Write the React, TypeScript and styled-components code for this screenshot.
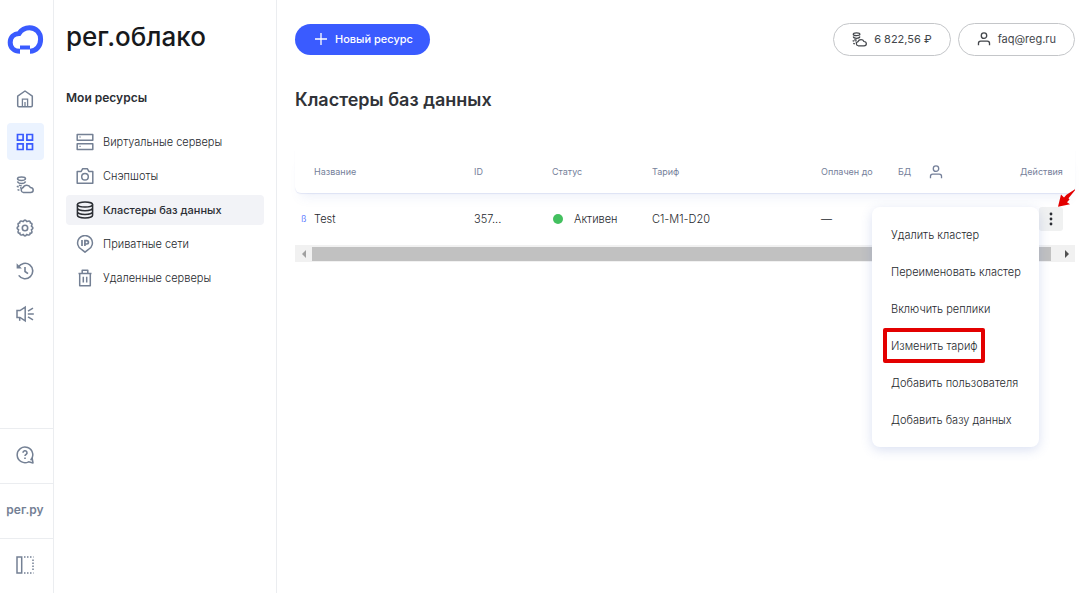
import React from "react";
import styled, { createGlobalStyle, css } from "styled-components";

const color = {
  text: "#25282d",
  strong: "#2b2e34",
  muted: "#75809a",
  icon: "#748094",
  brand: "#3a5bff",
  line: "#ebedf0",
  mark: "#e30000",
};

const GlobalStyle = createGlobalStyle`
  *, *::before, *::after { box-sizing: border-box; }
  body {
    margin: 0;
    background: #fff;
    color: ${color.text};
    font-family: Inter, "Liberation Sans", sans-serif;
    font-size: 11px;
    font-weight: 300;
    line-height: 16px;
  }
  button { font: inherit; color: inherit; border: 0; background: none; padding: 0; cursor: pointer; }
  a { color: inherit; text-decoration: none; }
  ul { list-style: none; margin: 0; padding: 0; }
  svg { display: block; flex: none; }
`;

const Page = styled.div`
  display: flex;
  min-height: 100vh;
`;

const Rail = styled.nav`
  flex: none;
  width: 54px;
  display: flex;
  flex-direction: column;
  border-right: 1px solid ${color.line};
  color: ${color.icon};
`;

const RailLogo = styled.a`
  padding: 24px 7px 25px;
`;

const RailList = styled.ul`
  display: flex;
  flex-direction: column;
  gap: 6px;
  padding-left: 7px;
  flex: 1;
`;

const RailLink = styled.a<{ $active?: boolean }>`
  display: flex;
  align-items: center;
  width: 37px;
  height: 37px;
  padding: 0 9px;
  border-radius: 4px;
  ${(p) => p.$active && css`
    background: #ebf3ff;
    color: ${color.brand};
  `}
`;

const RailFooterLink = styled.a`
  display: flex;
  align-items: center;
  justify-content: center;
  height: 55px;
  padding: 0 3px 2px 0;
  border-top: 1px solid ${color.line};
  font-size: 12px;
  font-weight: 600;
`;

const Sidebar = styled.aside`
  flex: none;
  width: 223px;
  padding: 19px 12px 0;
  border-right: 1px solid ${color.line};
`;

const Brand = styled.a`
  display: block;
  font-size: 26px;
  line-height: 36px;
  font-weight: 500;
  color: #17191c;
`;

const SidebarTitle = styled.h2`
  margin: 35px 0 21px;
  font-size: 12px;
  line-height: 16px;
  font-weight: 600;
  color: ${color.strong};
`;

const SidebarList = styled.ul`
  display: flex;
  flex-direction: column;
  gap: 4px;
`;

const SidebarLink = styled.a<{ $active?: boolean }>`
  display: flex;
  align-items: center;
  gap: 9px;
  height: 30px;
  padding: 0 10px;
  border-radius: 4px;
  svg { color: ${color.icon}; }
  ${(p) => p.$active && css`
    background: #f2f3f7;
    color: ${color.strong};
    font-weight: 500;
    svg { color: ${color.strong}; }
  `}
`;

const Main = styled.main`
  flex: 1;
  min-width: 0;
  padding: 23px 14px 0 18px;
`;

const TopBar = styled.header`
  display: flex;
  align-items: center;
  gap: 7px;
`;

const PrimaryButton = styled.button`
  display: flex;
  align-items: center;
  gap: 8px;
  height: 31px;
  margin-right: auto;
  padding: 0 17px 1px 20px;
  border-radius: 16px;
  background: ${color.brand};
  color: #fff;
  font-weight: 500;
`;

const PillButton = styled.button`
  display: flex;
  align-items: center;
  gap: 7px;
  height: 33px;
  padding: 0 18px 1px;
  border: 1px solid #c4c6c9;
  border-radius: 17px;
  font-weight: 400;
  color: #43464b;
`;

const Title = styled.h1`
  margin: 32px 0 38px;
  font-size: 18px;
  line-height: 24px;
  font-weight: 600;
  color: #303338;
`;

const Table = styled.table`
  width: 100%;
  table-layout: fixed;
  border-collapse: separate;
  border-spacing: 0;
`;

const Col = styled.col<{ $width?: number }>`
  width: ${(p) => (p.$width ? `${p.$width}px` : "auto")};
`;

const HeadRow = styled.tr`
  border-radius: 0 0 6px 6px;
  box-shadow: 0 1px 1px rgba(90, 110, 200, 0.14), 0 10px 12px -6px rgba(90, 120, 210, 0.1);
`;

const HeadCell = styled.th`
  height: 43px;
  padding: 0;
  text-align: left;
  font-size: 9px;
  font-weight: 400;
  color: ${color.muted};
  white-space: nowrap;
  &:first-child { padding-left: 19px; }
`;

const Cell = styled.td`
  height: 52px;
  padding: 0;
  white-space: nowrap;
`;

const NameCell = styled.div`
  display: flex;
  align-items: center;
  gap: 6px;
  padding-left: 6px;
`;

const Beta = styled.span`
  width: 7px;
  font-size: 9px;
  color: ${color.brand};
`;

const Status = styled.div`
  display: flex;
  align-items: center;
  gap: 11px;
  padding-left: 1px;
  &::before {
    content: "";
    width: 10px;
    height: 10px;
    border-radius: 50%;
    background: #43c05f;
  }
`;

const ActionsWrap = styled.div`
  position: relative;
  width: 24px;
  margin-left: 19px;
`;

const MoreButton = styled.button`
  display: flex;
  align-items: center;
  justify-content: center;
  width: 24px;
  height: 24px;
  border-radius: 3px;
  background: #f0f1f1;
  color: ${color.strong};
`;

const Menu = styled.ul`
  position: absolute;
  z-index: 2;
  top: 0;
  right: 100%;
  width: 167px;
  padding: 9px 0;
  border-radius: 8px;
  background: #fff;
  box-shadow: 0 3px 12px rgba(70, 100, 190, 0.2);
`;

const MenuButton = styled.button`
  display: flex;
  align-items: center;
  width: 100%;
  height: 37px;
  padding: 0 11px;
`;

const MenuLabel = styled.span<{ $marked?: boolean }>`
  padding: 6px 3px 5px 4px;
  border: 4px solid ${(p) => (p.$marked ? color.mark : "transparent")};
  border-radius: 2px;
`;

const Pointer = styled.svg`
  position: absolute;
  z-index: 3;
  left: 18px;
  bottom: 100%;
`;

const ScrollTrack = styled.div`
  display: flex;
  align-items: center;
  height: 17px;
  background: #f1f1f1;
`;

const ScrollStep = styled.button`
  display: flex;
  align-items: center;
  justify-content: center;
  width: 17px;
  height: 17px;
`;

const ScrollThumb = styled.div`
  flex: 1;
  height: 14px;
  margin-right: 7px;
  background: #c1c1c1;
`;

type IconProps = { size?: number; width?: number; children: React.ReactNode };
const Icon = ({ size = 18, width = 1.5, children }: IconProps) => (
  <svg width={size} height={size} viewBox="0 0 18 18" fill="none" stroke="currentColor" strokeWidth={width} aria-hidden="true">
    {children}
  </svg>
);

const HomeIcon = () => (
  <Icon width={1.5}>
    <path d="M1.700 6.200 9 1l7.300 5.200v9.300a1.200 1.200 0 0 1-1.200 1.200H2.900a1.200 1.200 0 0 1-1.200-1.200z" strokeLinejoin="round" />
    <path d="M6.400 16.700V9.200h5.200v7.500M9 12v4.700" strokeWidth="1.300" />
  </Icon>
);
const GridIcon = () => (
  <Icon width={1.7}>
    <path d="M1.500 1.500h5.600v5.600H1.500zM10.900 1.500h5.600v5.600h-5.600zM1.500 10.900h5.600v5.600H1.500zM10.900 10.900h5.600v5.600h-5.600z" />
  </Icon>
);
const CoinsCloudIcon = ({ size = 18, width = 1.5 }: { size?: number; width?: number }) => (
  <Icon size={size} width={width}>
    <ellipse cx="5.500" cy="2.700" rx="4" ry="1.700" />
    <path d="M1.500 5.400c.4 1.400 1.900 2.100 4 2.100s3.600-.7 4-2.100M2.800 9.200c.8.400 1.700.600 2.900.600M.8 10.300l1.900.8M1.500 13.600l1.900.6M4 11.700l1.200.3" />
    <path d="M7.400 16.500a2.500 2.500 0 0 1-.3-4.900c.6-1.500 2-2.400 3.700-2.400 1.600 0 2.900.8 3.500 2.200 1.700.1 2.900 1.100 2.900 2.600s-1.100 2.500-2.700 2.500z" />
  </Icon>
);
const GearIcon = () => (
  <Icon width={1.6}>
    <path
      d="M7.200 2.600Q9-.400 10.800 2.600 14.800 1 14.300 4 17 3.700 15.400 7.200 18.400 9 15.400 10.800 17 14.700 14 14.100 14.500 17 10.800 15.400 9 18.400 7.200 15.400 3.500 17 4 14.100 1 14.700 2.600 10.800-.4 9 2.600 7.200 1 3.700 3.800 4 3.300 1 7.200 2.600z"
      strokeLinejoin="round"
    />
    <circle cx="9" cy="9" r="2.700" />
  </Icon>
);
const HistoryIcon = () => (
  <Icon width={1.6}>
    <path d="M2.300 5.300A7.700 7.700 0 1 1 2.700 13.400" />
    <path d="M9 5v4.500l3 2.200" />
    <path d="M.6 1.300v5.300h5.300z" fill="currentColor" stroke="none" />
  </Icon>
);
const HornIcon = () => (
  <Icon width={1.5}>
    <path d="M1 5.600h3L9.200 2.100v13.800L4 12.400H1z" />
    <path d="M3.700 12.500v3.300" />
    <path d="M11.800 9h6M12 6.200l5-3M12 11.800l5 3" />
  </Icon>
);
const HelpIcon = () => (
  <Icon width={1.5}>
    <path d="M14.600 14.300A7.800 7.800 0 1 0 12.600 15.800L17 16.900 16.200 12.300" strokeLinejoin="round" />
    <path d="M7 6.800a2 2 0 1 1 3 1.700c-.8.400-1 .700-1 1.600M9 11.500V13" strokeWidth="1.600" />
  </Icon>
);
const PanelIcon = () => (
  <Icon width={1.5}>
    <path d="M1 1h4.700v16H1z" />
    <path d="M8 1h9.500M8 17h9.500" strokeDasharray="1.500 1.500" />
    <path d="M17 3.500v12" strokeDasharray="1.500 1.500" />
  </Icon>
);
const ServerIcon = () => (
  <Icon width={1.5}>
    <path d="M1.200 1.500h15.600v5.700H1.200zM1.200 10.800h15.600v5.700H1.200z" strokeLinejoin="round" />
    <path d="M3.300 4h1.500M3.300 13.300h1.500" strokeWidth="1" />
  </Icon>
);
const CameraIcon = () => (
  <Icon width={1.5}>
    <path d="M1.200 4.400h4l1.500-2.700h4.600l1.500 2.700h4v11.800H1.200z" strokeLinejoin="round" />
    <circle cx="9" cy="9.700" r="3.300" />
  </Icon>
);
const DatabaseIcon = () => (
  <Icon width={1.5}>
    <ellipse cx="9" cy="3.600" rx="7.600" ry="2.500" />
    <path d="M1.400 3.600v10.700c0 1.500 3.400 2.700 7.600 2.700s7.600-1.200 7.600-2.700V3.600M1.400 7.100c0 1.500 3.400 2.700 7.600 2.700s7.600-1.200 7.600-2.700M1.400 10.700c0 1.500 3.400 2.700 7.600 2.700s7.600-1.200 7.600-2.700" />
  </Icon>
);
const IpIcon = () => (
  <Icon width={1.5}>
    <path d="M9 17.200 5.800 14.600A7.400 7.400 0 1 1 12.200 14.600z" strokeLinejoin="round" />
    <path d="M6 5v6M8.900 11V5.700h1.900a1.600 1.600 0 0 1 0 3.300H8.900" strokeWidth="1.700" />
  </Icon>
);
const TrashIcon = () => (
  <Icon width={1.5}>
    <path d="M2.500 4.500h13M3.700 4.500v12.300h10.600V4.500M6.200 4.300V1.300h5.600v3M7.300 7.700v5.800M10.700 7.700v5.800" strokeLinejoin="round" />
  </Icon>
);
const UserIcon = ({ size = 14, width = 1.7 }: { size?: number; width?: number }) => (
  <Icon size={size} width={width}>
    <circle cx="9" cy="4.700" r="3.500" />
    <path d="M1.900 17v-2.500a2.800 2.800 0 0 1 2.800-2.800h8.600a2.800 2.800 0 0 1 2.800 2.800V17" />
  </Icon>
);
const PlusIcon = () => (
  <svg width="12" height="12" viewBox="0 0 12 12" stroke="currentColor" strokeWidth="1.300" aria-hidden="true">
    <path d="M6 0v12M0 6h12" />
  </svg>
);
const CloudLogo = () => (
  <svg width="37" height="31" viewBox="0 0 37 31" fill="none" aria-hidden="true">
    <path
      d="M13 27.300C7 27.300 3.200 23.500 3.200 18.500 3.200 13 7 9.800 12 9.500 14.500 5.800 18.500 3.800 22.500 3.800 29 3.800 33.600 8.800 33.600 15.200 33.600 21.800 29.500 27.300 23 27.300"
      stroke={color.brand}
      strokeWidth="5"
    />
    <path d="M13 21.500h10v4H13z" fill={color.brand} />
  </svg>
);

const railItems = [
  { label: "Главная", icon: <HomeIcon /> },
  { label: "Ресурсы", icon: <GridIcon />, active: true },
  { label: "Баланс", icon: <CoinsCloudIcon /> },
  { label: "Настройки", icon: <GearIcon /> },
  { label: "История", icon: <HistoryIcon /> },
  { label: "Новости", icon: <HornIcon /> },
];

const resources = [
  { label: "Виртуальные серверы", icon: <ServerIcon /> },
  { label: "Снэпшоты", icon: <CameraIcon /> },
  { label: "Кластеры баз данных", icon: <DatabaseIcon />, active: true },
  { label: "Приватные сети", icon: <IpIcon /> },
  { label: "Удаленные серверы", icon: <TrashIcon /> },
];

const menuItems = [
  { label: "Удалить кластер" },
  { label: "Переименовать кластер" },
  { label: "Включить реплики" },
  { label: "Изменить тариф", marked: true },
  { label: "Добавить пользователя" },
  { label: "Добавить базу данных" },
];

const columnWidths = [179, 78, 100, undefined, 77, 31, 91, 55];

export default function App() {
  return (
    <>
      <GlobalStyle />
      <Page>
        <Rail>
          <RailLogo href="#" aria-label="рег.облако"><CloudLogo /></RailLogo>
          <RailList>
            {railItems.map((item) => (
              <li key={item.label}>
                <RailLink href="#" aria-label={item.label} $active={item.active}>{item.icon}</RailLink>
              </li>
            ))}
          </RailList>
          <RailFooterLink href="#" aria-label="Помощь"><HelpIcon /></RailFooterLink>
          <RailFooterLink href="#">рег.ру</RailFooterLink>
          <RailFooterLink href="#" aria-label="Свернуть панель"><PanelIcon /></RailFooterLink>
        </Rail>

        <Sidebar>
          <Brand href="#">рег.облако</Brand>
          <SidebarTitle>Мои ресурсы</SidebarTitle>
          <SidebarList>
            {resources.map((item) => (
              <li key={item.label}>
                <SidebarLink href="#" $active={item.active}>{item.icon}{item.label}</SidebarLink>
              </li>
            ))}
          </SidebarList>
        </Sidebar>

        <Main>
          <TopBar>
            <PrimaryButton type="button"><PlusIcon />Новый ресурс</PrimaryButton>
            <PillButton type="button"><CoinsCloudIcon size={15} />6 822,56 ₽</PillButton>
            <PillButton type="button"><UserIcon />faq@reg.ru</PillButton>
          </TopBar>
          <Title>Кластеры баз данных</Title>
          <Table>
            <colgroup>
              {columnWidths.map((width, i) => <Col key={i} $width={width} />)}
            </colgroup>
            <thead>
              <HeadRow>
                <HeadCell scope="col">Название</HeadCell>
                <HeadCell scope="col">ID</HeadCell>
                <HeadCell scope="col">Статус</HeadCell>
                <HeadCell scope="col">Тариф</HeadCell>
                <HeadCell scope="col">Оплачен до</HeadCell>
                <HeadCell scope="col">БД</HeadCell>
                <HeadCell scope="col" aria-label="Пользователи"><UserIcon /></HeadCell>
                <HeadCell scope="col">Действия</HeadCell>
              </HeadRow>
            </thead>
            <tbody>
              <tr>
                <Cell><NameCell><Beta>ß</Beta>Test</NameCell></Cell>
                <Cell>357...</Cell>
                <Cell><Status>Активен</Status></Cell>
                <Cell>C1-M1-D20</Cell>
                <Cell>—</Cell>
                <Cell />
                <Cell />
                <Cell>
                  <ActionsWrap>
                    <MoreButton type="button" aria-label="Действия" aria-expanded="true">
                      <svg width="4" height="14" viewBox="0 0 4 14" fill="currentColor" aria-hidden="true">
                        <circle cx="2" cy="2" r="1.400" />
                        <circle cx="2" cy="7" r="1.400" />
                        <circle cx="2" cy="12" r="1.400" />
                      </svg>
                    </MoreButton>
                    <Menu>
                      {menuItems.map((item) => (
                        <li key={item.label}>
                          <MenuButton type="button"><MenuLabel $marked={item.marked}>{item.label}</MenuLabel></MenuButton>
                        </li>
                      ))}
                    </Menu>
                    <Pointer width="18" height="18" viewBox="0 0 18 18" aria-hidden="true">
                      <path d="M18 .300 9.500 5.800 7 8.500 4 5.500 1 17.800 13 15.300 10 13.300 12.500 10.500 11.500 9.300 18 1.300z" fill={color.mark} />
                    </Pointer>
                  </ActionsWrap>
                </Cell>
              </tr>
            </tbody>
          </Table>
          <ScrollTrack>
            <ScrollStep type="button" aria-label="Прокрутить влево">
              <svg width="4" height="8" viewBox="0 0 4 8" fill="#a0a0a0" aria-hidden="true"><path d="M4 0v8L0 4z" /></svg>
            </ScrollStep>
            <ScrollThumb />
            <ScrollStep type="button" aria-label="Прокрутить вправо">
              <svg width="4" height="8" viewBox="0 0 4 8" fill="#505050" aria-hidden="true"><path d="M0 0v8l4-4z" /></svg>
            </ScrollStep>
          </ScrollTrack>
        </Main>
      </Page>
    </>
  );
}
